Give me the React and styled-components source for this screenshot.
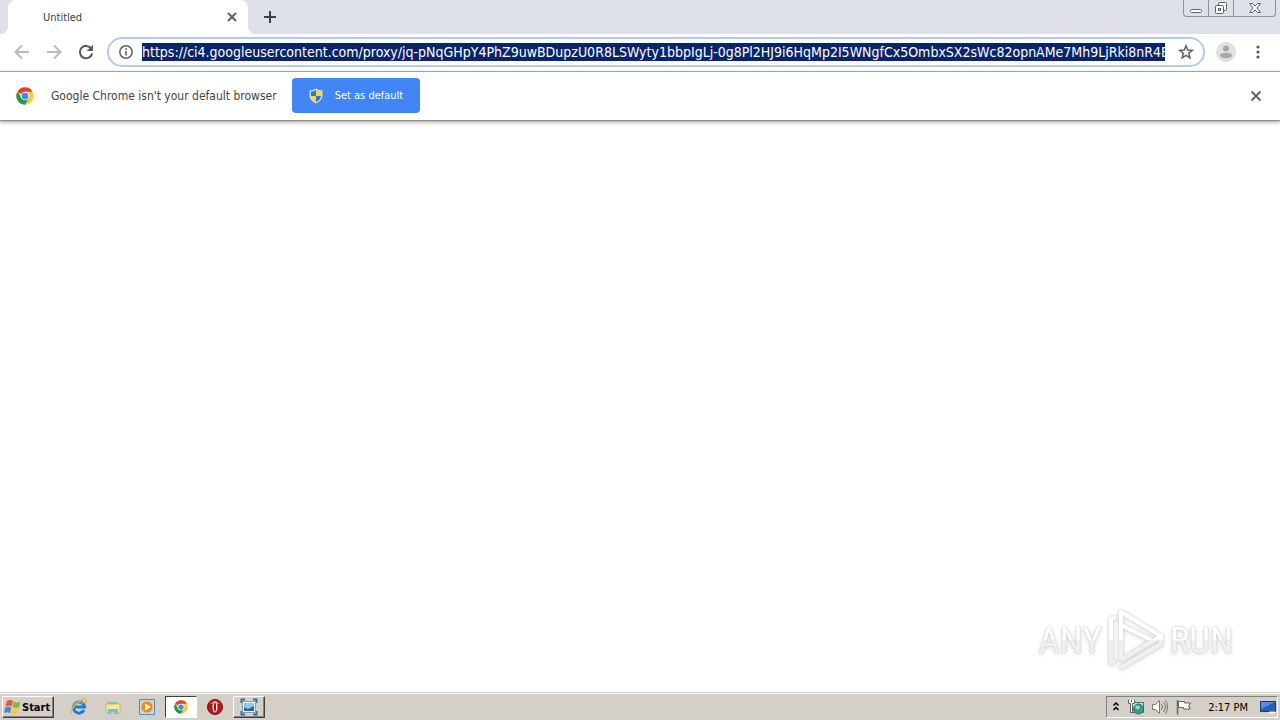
import styled, { createGlobalStyle } from 'styled-components';

const url =
  'https://ci4.googleusercontent.com/proxy/jq-pNqGHpY4PhZ9uwBDupzU0R8LSWyty1bbpIgLj-0g8Pl2HJ9i6HqMp2I5WNgfCx5OmbxSX2sWc82opnAMe7Mh9LjRki8nR4EwKq';

function App() {
  return (
    <Screen>
      <GlobalStyle />
      <TabStrip>
        <Tab>
          <TabTitle>Untitled</TabTitle>
          <IconButton $size={16} aria-label="Close tab">
            <CrossIcon size={16} />
          </IconButton>
        </Tab>
        <NewTab aria-label="New tab">
          <svg width="14" height="14" viewBox="0 0 14 14">
            <path d="M7 1v12M1 7h12" stroke="#3c4043" strokeWidth="2" />
          </svg>
        </NewTab>
        <WindowControls>
          <WindowButton $width={24} aria-label="Minimize">
            <svg width="14" height="14" viewBox="0 0 14 14">
              <rect x="1.5" y="8.5" width="11" height="3" rx="1" fill="#fff" stroke="#5b616c" />
            </svg>
          </WindowButton>
          <WindowButton $width={25} aria-label="Restore">
            <svg width="14" height="14" viewBox="0 0 14 14" fill="#fff" stroke="#5b616c">
              <rect x="4.5" y="1.5" width="8" height="8" rx="1" />
              <rect x="1.5" y="4.5" width="8" height="8" rx="1" />
              <rect x="4.5" y="7.5" width="2" height="2" />
            </svg>
          </WindowButton>
          <WindowButton $width={42} aria-label="Close">
            <svg width="14" height="14" viewBox="0 0 14 14">
              <path
                d="M1.500 2.500h3L7 5l2.500-2.500h3L9 7l3.500 4.500h-3L7 9l-2.500 2.500h-3L5 7z"
                fill="#fff"
                stroke="#5b616c"
              />
            </svg>
          </WindowButton>
        </WindowControls>
      </TabStrip>

      <Toolbar>
        <IconButton $size={28} aria-label="Back">
          <svg width="16" height="16" viewBox="0 0 16 16" fill="none" stroke="#bababa" strokeWidth="2">
            <path d="M15 8H2.500M8 1.500L1.500 8L8 14.500" />
          </svg>
        </IconButton>
        <IconButton $size={28} aria-label="Forward">
          <svg width="16" height="16" viewBox="0 0 16 16" fill="none" stroke="#bababa" strokeWidth="2">
            <path d="M1 8h12.500M8 1.500L14.500 8L8 14.500" />
          </svg>
        </IconButton>
        <IconButton $size={28} aria-label="Reload">
          <svg width="16" height="16" viewBox="0 0 16 16">
            <path d="M13.300 4.600A6.200 6.200 0 1 0 14.200 9.500" fill="none" stroke="#5a5a5a" strokeWidth="2" />
            <path d="M15 0.800V7H8.800z" fill="#5a5a5a" />
          </svg>
        </IconButton>
        <Omnibox>
          <IconButton $size={16} aria-label="View site information">
            <svg width="16" height="16" viewBox="0 0 16 16">
              <circle cx="8" cy="8" r="6.200" fill="none" stroke="#5f6368" strokeWidth="1.500" />
              <path d="M8 7v4.500M8 4.300v1.700" stroke="#5f6368" strokeWidth="1.600" />
            </svg>
          </IconButton>
          <Address aria-label="Address" value={url} readOnly />
          <IconButton $size={16} aria-label="Bookmark this page">
            <svg width="16" height="16" viewBox="0 0 16 16">
              <path
                d="M8 1.800l1.700 4.300 4.600.3-3.600 2.900 1.200 4.500L8 11.300l-3.900 2.500 1.200-4.500-3.600-2.900 4.600-.3z"
                fill="none"
                stroke="#5f6368"
                strokeWidth="1.500"
              />
            </svg>
          </IconButton>
        </Omnibox>
        <Actions>
          <IconButton $size={20} aria-label="Profile">
            <svg width="20" height="20" viewBox="0 0 20 20">
              <circle cx="10" cy="10" r="10" fill="#e1e1e1" />
              <circle cx="10" cy="6.500" r="3" fill="#a8a8a8" />
              <ellipse cx="10" cy="13.500" rx="6" ry="2.700" fill="#a8a8a8" />
            </svg>
          </IconButton>
          <IconButton $size={20} aria-label="Menu">
            <svg width="4" height="16" viewBox="0 0 4 16" fill="#5a5a5a">
              <circle cx="2" cy="3" r="1.600" />
              <circle cx="2" cy="8" r="1.600" />
              <circle cx="2" cy="13" r="1.600" />
            </svg>
          </IconButton>
        </Actions>
      </Toolbar>

      <InfoBar>
        <ChromeIcon size={18} />
        <Message>Google Chrome isn't your default browser</Message>
        <DefaultButton>
          <svg width="14" height="16" viewBox="0 0 14 16">
            <path d="M7 .5Q10 2.500 13.500 2.500V8Q13 13 7 15.500Q1 13 .5 8V2.500Q4 2.500 7 .5z" fill="#d8dccb" />
            <path d="M7 2V8H2V3.500Q5 3.500 7 2z" fill="#2e78c8" />
            <path d="M7 2V8h5V3.500Q9 3.500 7 2z" fill="#f4d83c" />
            <path d="M7 8V14Q2.500 12 2 8z" fill="#f4d83c" />
            <path d="M7 8V14q4.500-2 5-6z" fill="#2e78c8" />
          </svg>
          Set as default
        </DefaultButton>
        <CloseSlot>
          <IconButton $size={16} aria-label="Dismiss">
            <CrossIcon size={16} large />
          </IconButton>
        </CloseSlot>
      </InfoBar>

      <Page>
        <Watermark>
          <WatermarkText>ANY</WatermarkText>
          <svg width="58" height="64" viewBox="0 0 58 64" fill="none" strokeLinejoin="round">
            <defs>
              <linearGradient id="shade" gradientUnits="userSpaceOnUse" x1="0" y1="0" x2="0" y2="64">
                <stop offset="0.5" stopColor="#fff" />
                <stop offset="0.5" stopColor="#f0f0f0" />
              </linearGradient>
            </defs>
            <g stroke="url(#shade)" strokeWidth="4">
              <path d="M9 9L4 11V55L9 53" />
              <path d="M14 52V4L54 28L14 52M14 17L46 33" />
              <path d="M13 60L54 36V28" />
            </g>
          </svg>
          <WatermarkText>RUN</WatermarkText>
        </Watermark>
      </Page>

      <Taskbar>
        <StartButton>
          <WindowsFlag />
          Start
        </StartButton>
        <TaskButton aria-label="Internet Explorer">
          <svg width="18" height="18" viewBox="0 0 18 18" fill="none">
            <path d="M14 12A5.500 5.500 0 1 1 14.500 9H5" stroke="#1d7fd0" strokeWidth="3" />
            <path d="M4 8A5 5 0 0 1 13 6" stroke="#70c8f4" strokeWidth="1" />
            <path d="M2 15Q-1 14 5 7Q13-1 16 2Q17 3 15 6" stroke="#e4b63a" strokeWidth="1.500" />
          </svg>
        </TaskButton>
        <TaskButton aria-label="Windows Explorer">
          <svg width="18" height="18" viewBox="0 0 18 18">
            <path d="M2 3h5l1 2h7v11H2z" fill="#e8ca64" />
            <path d="M4 4h9v4H4z" fill="#72c7bb" />
            <path d="M2 6h14v9H2z" fill="#f7e6a0" stroke="#d8b450" />
            <path d="M4 16v-5h10v5h-3v-2H7v2z" fill="#74bce8" />
          </svg>
        </TaskButton>
        <TaskButton aria-label="Media Player">
          <svg width="18" height="18" viewBox="0 0 18 18">
            <path d="M1.500 1.500h15v15h-15z" fill="#b7dcf3" stroke="#4a91c7" />
            <circle cx="9" cy="9" r="6" fill="#f08a1c" stroke="#f8c47a" />
            <path d="M7 5.500v7l6-3.500z" fill="#fff" />
          </svg>
        </TaskButton>
        <TaskButton $active aria-label="Google Chrome">
          <ChromeIcon size={14} />
        </TaskButton>
        <TaskButton aria-label="Opera">
          <svg width="18" height="18" viewBox="0 0 18 18">
            <circle cx="9" cy="9" r="7.500" fill="#b5161b" stroke="#7e0b0e" />
            <path d="M4 6Q9-1 14 6z" fill="#d9605f" />
            <ellipse cx="9" cy="9" rx="2.500" ry="5.500" fill="#f3e9e8" />
            <ellipse cx="9" cy="9" rx="1" ry="4.500" fill="#8d1013" />
          </svg>
        </TaskButton>
        <TaskButton $raised aria-label="Screen viewer">
          <svg width="18" height="18" viewBox="0 0 18 18">
            <path d="M1.500 5V1.500H5M13 1.500h3.500V5M16.500 13v3.500H13M5 16.500H1.500V13" fill="none" stroke="#3d7093" strokeWidth="2" />
            <path d="M2.500 3.500h13v11h-13z" fill="#eaf6fb" stroke="#6fa5c2" />
            <path d="M4 5h10v8H4z" fill="#8ccbea" />
            <path d="M4 13V9l4 2 6-3v5z" fill="#2e668c" />
          </svg>
        </TaskButton>
        <Tray>
          <svg width="8" height="12" viewBox="0 0 8 12" fill="none" stroke="#000" strokeWidth="1.500">
            <path d="M1.500 4.500l2.500-2.500 2.500 2.500M1.500 9l2.500-2.500 2.500 2.500" />
          </svg>
          <svg width="16" height="16" viewBox="0 0 16 16">
            <path d="M3.500 3.500h12v10h-12z" fill="#d5e6e2" stroke="#56666b" />
            <circle cx="10.500" cy="10" r="5" fill="#3a9a92" stroke="#2d6f7c" />
            <path d="M7 8q3-3 5 0l-2 3z" fill="#9fdcc0" />
            <path d="M.5.500v4h2v9h2v-9h2v-4M3.500.500v3" fill="#fff" stroke="#56666b" />
          </svg>
          <svg width="16" height="16" viewBox="0 0 16 16" fill="none" stroke="#777">
            <path d="M.5 5.500h3l4-4v13l-4-4h-3z" fill="#fff" />
            <path d="M9.500 5q2 3 0 6M11.500 3q4 5 0 10M13.500 1q4 7 0 14" />
          </svg>
          <svg width="16" height="16" viewBox="0 0 16 16" fill="#fff" stroke="#666">
            <path d="M2.500 2.500h6v1.500h6l-2 3 2 3h-7V8.500h-5z" />
            <path d="M1.500 1v14.500" strokeWidth="1.500" />
          </svg>
          <Clock>2:17 PM</Clock>
          <svg width="16" height="16" viewBox="0 0 16 16">
            <path d="M.5 2.500h15v10H.5z" fill="#2562b5" stroke="#16396e" />
            <path d="M1 3h14L1 10z" fill="#558fda" />
            <path d="M9 13.500h6" stroke="#f5f5f5" strokeWidth="2" />
          </svg>
        </Tray>
      </Taskbar>
    </Screen>
  );
}

function CrossIcon({ size, large }) {
  return (
    <svg width={size} height={size} viewBox="0 0 16 16">
      <path
        d={large ? 'M3.500 3.500l9 9M12.500 3.500l-9 9' : 'M4 4l8 8M12 4l-8 8'}
        stroke="#5f6368"
        strokeWidth="2"
      />
    </svg>
  );
}

function ChromeIcon({ size }) {
  return (
    <svg width={size} height={size} viewBox="0 0 48 48">
      <circle cx="24" cy="24" r="23" fill="#fbc934" />
      <path d="M24 24L4 12.500A23 23 0 0 1 44 12.500H24z" fill="#de4132" />
      <path d="M4 12.500A23 23 0 0 0 24 47L34 29.500 24 24 14 30z" fill="#1a9b54" />
      <circle cx="24" cy="24" r="11.500" fill="#fff" />
      <circle cx="24" cy="24" r="9" fill="#4285f4" />
    </svg>
  );
}

function WindowsFlag() {
  return (
    <svg width="17" height="16" viewBox="0 0 17 16">
      <path d="M3 2Q6 0 9 2L7.500 7.500Q4.500 6 1.500 7.500z" fill="#e8582c" />
      <path d="M10 2.500q3 2 6.500 0L15 8q-3 2-6.500 0z" fill="#7fb93a" />
      <path d="M1.300 8.500q3-1.500 6 0L6 14Q3 12.500 0 14z" fill="#3f8bd8" />
      <path d="M8.300 9q3 2 6.500 0L13.300 14.500q-3.500 2-6.500 0z" fill="#f8c93a" />
    </svg>
  );
}

export default App;

const GlobalStyle = createGlobalStyle`
  * {
    box-sizing: border-box;
  }
  body {
    margin: 0;
    background: #fff;
    font-family: 'DejaVu Sans Condensed', 'Noto Sans', sans-serif;
  }
  button,
  input {
    font-family: inherit;
  }
  svg {
    display: block;
    flex: none;
  }
`;

const Screen = styled.div`
  display: flex;
  flex-direction: column;
  min-height: 100vh;
  overflow: hidden;
`;

const TabStrip = styled.div`
  display: flex;
  align-items: center;
  height: 34px;
  padding: 0 4px 0 8px;
  background: #dee1e8;
`;

const Tab = styled.div`
  position: relative;
  display: flex;
  align-items: center;
  justify-content: space-between;
  width: 240px;
  height: 34px;
  padding: 0 8px 0 35px;
  border-radius: 8px 8px 0 0;
  background: #fff;

  &::before,
  &::after {
    content: '';
    position: absolute;
    bottom: 0;
    width: 8px;
    height: 8px;
  }
  &::before {
    left: -8px;
    background: radial-gradient(circle at 0 0, #dee1e8 8px, #fff 8px);
  }
  &::after {
    right: -8px;
    background: radial-gradient(circle at 100% 0, #dee1e8 8px, #fff 8px);
  }
`;

const TabTitle = styled.span`
  font-size: 11px;
  color: #3c4043;
`;

const IconButton = styled.button`
  display: flex;
  flex: none;
  align-items: center;
  justify-content: center;
  width: ${(props) => props.$size}px;
  height: ${(props) => props.$size}px;
  padding: 0;
  border: none;
  background: none;
`;

const NewTab = styled(IconButton)`
  width: 28px;
  height: 28px;
  margin-left: 8px;
`;

const WindowControls = styled.div`
  display: flex;
  align-self: flex-start;
  margin-left: auto;
  border: 1px solid #8d929c;
  border-top: none;
  border-radius: 0 0 4px 4px;
`;

const WindowButton = styled.button`
  display: flex;
  align-items: center;
  justify-content: center;
  width: ${(props) => props.$width}px;
  height: 16px;
  padding: 0;
  border: none;
  background: none;

  & + & {
    border-left: 1px solid #8d929c;
  }
`;

const Toolbar = styled.div`
  display: flex;
  align-items: center;
  gap: 4px;
  height: 38px;
  padding: 0 12px 1px 8px;
  border-bottom: 1px solid #b4b4b6;
`;

const Omnibox = styled.div`
  display: flex;
  flex: 1;
  align-items: center;
  min-width: 0;
  height: 30px;
  margin-left: 3px;
  padding: 0 9px;
  border: 2px solid #b6caee;
  border-radius: 15px;
`;

const Address = styled.input`
  flex: 1;
  min-width: 0;
  height: 18px;
  margin: 0 13px 0 8px;
  padding: 0;
  border: none;
  outline: none;
  background: #0a246a;
  color: #fff;
  font-size: 14px;
`;

const Actions = styled.div`
  display: flex;
  gap: 12px;
  margin-left: 7px;
`;

const InfoBar = styled.div`
  display: flex;
  align-items: center;
  height: 49px;
  padding: 0 16px 1px;
  border-bottom: 1px solid #8c8c8c;
  box-shadow: 0 1px 4px rgba(0, 0, 0, 0.4);
`;

const Message = styled.span`
  margin: 0 15px 0 17px;
  font-size: 12px;
  color: #444;
  white-space: nowrap;
`;

const DefaultButton = styled.button`
  display: flex;
  align-items: center;
  gap: 12px;
  height: 35px;
  padding: 0 17px;
  border: none;
  border-radius: 4px;
  background: #4285f4;
  color: #fff;
  font-size: 11px;
  white-space: nowrap;
`;

const CloseSlot = styled.div`
  margin-left: auto;
`;

const Page = styled.main`
  display: flex;
  flex: 1;
  align-items: flex-end;
  justify-content: flex-end;
  padding: 0 47px 20px;
`;

const Watermark = styled.div`
  display: flex;
  align-items: center;
  gap: 5px;
  filter: drop-shadow(0 0 1px #ccc) drop-shadow(0 1px 2px #ddd);
`;

const WatermarkText = styled.span`
  background: linear-gradient(#fff 50%, #f0f0f0 50%);
  background-clip: text;
  color: transparent;
  font-family: 'Roboto Condensed', 'Roboto', sans-serif;
  font-size: 37px;
`;

const Taskbar = styled.footer`
  display: flex;
  align-items: center;
  gap: 2px;
  height: 28px;
  padding: 1px 2px 0;
  border-top: 1px solid #d4d0c8;
  background: #d4d0c8;
  box-shadow: inset 0 1px #fff;
`;

const StartButton = styled.button`
  display: flex;
  align-items: center;
  gap: 1px;
  height: 22px;
  margin-right: 7px;
  padding: 0 3px 0 1px;
  border: 1px solid;
  border-color: #fff #404040 #404040 #fff;
  background: #d4d0c8;
  box-shadow: inset -1px -1px #808080;
  color: #000;
  font-size: 11px;
  font-weight: bold;
`;

const TaskButton = styled.button`
  display: flex;
  align-items: center;
  justify-content: center;
  width: 32px;
  height: 22px;
  padding: 0;
  border: 1px solid transparent;
  border-color: ${(props) =>
    props.$active ? '#404040 #fff #fff #404040' : props.$raised ? '#fff #404040 #404040 #fff' : 'transparent'};
  background: ${(props) => (props.$active ? '#fff' : '#d4d0c8')};
  box-shadow: ${(props) => (props.$raised ? 'inset -1px -1px #808080' : 'none')};
`;

const Tray = styled.div`
  display: flex;
  align-items: center;
  gap: 8px;
  height: 22px;
  margin-left: auto;
  padding: 0 1px 0 5px;
  border: 1px solid;
  border-color: #808080 #fff #fff #808080;
`;

const Clock = styled.span`
  margin: 0 4px 0 8px;
  font-size: 11px;
  color: #000;
  white-space: nowrap;
`;
